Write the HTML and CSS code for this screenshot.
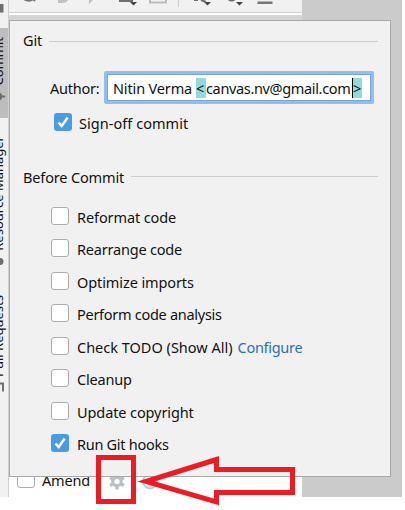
FILE: index.html
```html
<!DOCTYPE html>
<html lang="en">
<head>
<meta charset="utf-8">
<title>Commit options</title>
<link rel="stylesheet" href="styles.css">
</head>
<body>
<div class="window">
  <aside class="stripe">
    <svg class="stripe-art" width="9" height="497" viewBox="0 0 9 497">
      <path fill="#bdbdbd" d="M0 28h8v90H0z"/>
      <path fill="#6e6e6e" d="M0 4h3.500v8.500H0z"/>
      <path fill="#6e6e6e" d="M0 92.500l2 2v1h3v2H2v1l-2 2z"/>
      <circle cx="0" cy="261.500" r="3.500" fill="#6e6e6e"/>
      <path fill="none" stroke="#6e6e6e" stroke-width="2" d="M0 383.500h3v8"/>
      <path stroke="#cfcfcf" d="M8.500 0v497"/>
    </svg>
    <span class="tab tab-commit">Commit</span>
    <span class="tab tab-resource">Resource Manager</span>
    <span class="tab tab-pull">Pull Requests</span>
  </aside>
  <header class="toolbar">
    <svg width="293" height="20" viewBox="9 0 293 20">
      <path fill="#d4d6d6" d="M9 15h293v5H9z"/>
      <path fill="#fff" d="M9 13h293v2H9z"/>
      <path fill="#cfcfcf" d="M9 12h293v1H9z"/>
      <path d="M23-1.500q6 4.500 11 0M32-2l3 3" fill="none" stroke="#757575" stroke-width="2"/>
      <path d="M58 1.500h5q3 0 4-3" fill="none" stroke="#c2c2c2" stroke-width="3"/>
      <path d="M89 0h4l-4 4z" fill="#c2c2c2"/>
      <path d="M119-1h14v3h-14z" fill="#6e6e6e"/>
      <path d="M130 2h7l-3.500 3.500zM204 2h7l-3.500 3.500zM236 2h7l-3.500 3.500z" fill="#444"/>
      <path d="M150-2v4.500h16V-2" fill="none" stroke="#bdbdbd" stroke-width="2"/>
      <path d="M178.500 0v7" stroke="#cfcfcf"/>
      <path d="M194 0h4M201 0l5 2M228-1q4 3 7 0" fill="none" stroke="#6e6e6e" stroke-width="2"/>
      <path d="M257.500 1.500h15v2.500h-15z" fill="#777"/>
    </svg>
  </header>
  <footer class="footer">
    <span class="box"></span><span class="label amend">Amend</span>
  </footer>
</div>

<main class="popup">
  <h2 class="heading"><span class="t-git">Git</span></h2>
  <div class="author">
    <label class="label t-author">Author:</label>
    <div class="field"><span class="name">Nitin Verma</span><mark>&lt;</mark><span class="mail">canvas.nv@gmail.com</span><mark class="caret">&gt;</mark></div>
  </div>
  <div class="row signoff"><span class="box on"><svg viewBox="0 0 18 18"><path d="M4.500 9.500l3.200 3.500 6-8.500"/></svg></span><span class="label">Sign-off commit</span></div>
  <h2 class="heading before"><span>Before Commit</span></h2>
  <div class="list">
    <div class="row"><span class="box"></span><span class="label">Reformat code</span></div>
    <div class="row"><span class="box"></span><span class="label tight">Rearrange code</span></div>
    <div class="row"><span class="box"></span><span class="label">Optimize imports</span></div>
    <div class="row"><span class="box"></span><span class="label tighter">Perform code analysis</span></div>
    <div class="row"><span class="box"></span><span class="label todo">Check TODO (Show All)</span><a class="label link">Configure</a></div>
    <div class="row"><span class="box"></span><span class="label tight">Cleanup</span></div>
    <div class="row"><span class="box"></span><span class="label">Update copyright</span></div>
    <div class="row"><span class="box on"><svg viewBox="0 0 18 18"><path d="M4.500 9.500l3.200 3.500 6-8.500"/></svg></span><span class="label tighter">Run Git hooks</span></div>
  </div>
</main>

<svg class="annotation" width="210" height="60" viewBox="95 450 210 60">
  <g clip-path="url(#below)">
    <circle cx="117" cy="481.500" r="4.200" fill="none" stroke="#b9c0c5" stroke-width="3.200"/>
    <path d="M117 473.500v16M110.070 477.500l13.860 8M110.070 485.500l13.860-8" stroke="#b9c0c5" stroke-width="3.400"/>
    <circle cx="117" cy="481.500" r="2.600" fill="#fff"/>
    <circle cx="150" cy="481.500" r="7" fill="none" stroke="#c4c7c9" stroke-width="1.800"/>
  </g>
  <clipPath id="below"><path d="M95 477h210v33H95z"/></clipPath>
  <path class="ink" d="M98.500 457.500h35v44h-35z"/>
  <path class="ink" d="M146 481.500L216.500 459.500v10h76v23h-76v9.500z"/>
</svg>
</body>
</html>
```
FILE: styles.css
```css
* { box-sizing: border-box; }
body {
  margin: 0;
  width: 405px;
  height: 510px;
  overflow: hidden;
  position: relative;
  background: #fff;
  color: #111;
  font: 14.5px/20px "Noto Sans", sans-serif;
}
.window {
  width: 402px;
  height: 497px;
  display: grid;
  grid-template: 477px 20px / 9px 293px 100px;
  background: #cbcbcb;
}
.stripe {
  grid-row: 1 / 3;
  position: relative;
  overflow: hidden;
  background: #f1f1f1;
}
.stripe-art { display: block; }
.tab {
  position: absolute;
  right: 3px;
  line-height: 16px;
  writing-mode: vertical-rl;
  transform: rotate(180deg);
  font-size: 13px;
  white-space: nowrap;
}
.tab-commit { top: 37px; }
.tab-resource { top: 136px; }
.tab-pull { top: 295px; }
.toolbar { background: #f1f1f1; height: 20px; }
.toolbar svg { display: block; }
.footer {
  grid-row: 2;
  grid-column: 2;
  background: #fff;
  display: flex;
  padding-left: 8px;
}
.footer .box { margin-top: -7px; }
.footer .label { margin: -7px 0 0 7px; letter-spacing: -0.2px; }
.popup {
  position: absolute;
  left: 9px;
  top: 20px;
  width: 382px;
  height: 457px;
  padding: 10px 12px 0 13px;
  border: 1px solid #a9a9a9;
  background: #f1f1f1;
}
.heading {
  display: flex;
  align-items: center;
  gap: 7px;
  height: 20px;
  margin: 0;
  font-size: inherit;
  font-weight: 400;
  letter-spacing: -0.15px;
}
.heading::after { content: ""; flex: 1; height: 1px; background: #cecece; }
.t-git { padding-bottom: 2px; }
.heading, .label, .field { white-space: nowrap; }
.author { display: flex; align-items: center; margin-top: 20px; padding-left: 27px; }
.t-author { width: 54px; letter-spacing: -0.25px; }
.field {
  display: flex;
  align-items: center;
  width: 270px;
  height: 33px;
  padding-left: 6px;
  border: 3px solid #91bdf0;
  border-radius: 2px;
  background: #fff;
  box-shadow: inset 0 0 0 1px #7ba5d4;
}
.name { width: 83px; letter-spacing: -0.15px; }
mark { width: 10px; height: 20px; background: #93dad9; color: #111; }
.mail { width: 146px; letter-spacing: -0.35px; }
.caret { border-left: 1px solid #000; }
.row { display: flex; align-items: center; height: 32.500px; }
.box {
  flex: none;
  width: 18px;
  height: 18px;
  border: 1px solid #adadad;
  border-radius: 3px;
  background: #fff;
}
.row .label { margin-left: 8px; padding-top: 2px; letter-spacing: -0.1px; }
.row .link { margin-left: 5px; color: #2b70b8; letter-spacing: -0.3px; }
.row .todo { letter-spacing: 0; }
.row .tight { letter-spacing: -0.2px; }
.row .tighter { letter-spacing: -0.28px; }
.on { border: 0; background: #4b9be3; }
.on svg { display: block; fill: none; stroke: #fff; stroke-width: 2.500; }
.signoff { margin-top: 2px; padding-left: 31px; }
.signoff .label { margin-left: 7px; letter-spacing: 0.04px; }
.before { margin-top: 28px; }
.list { margin-top: 13px; padding-left: 28px; }
.annotation { position: absolute; left: 95px; top: 450px; }
.ink { fill: none; stroke: #ed1c24; stroke-width: 5; }
```
